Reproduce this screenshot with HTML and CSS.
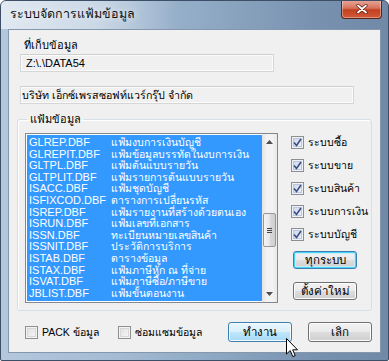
FILE: index.html
```html
<!DOCTYPE html>
<html>
<head>
<meta charset="utf-8">
<link rel="stylesheet" href="styles.css">
</head>
<body>
<div class="window">
  <div class="titlebar">
    <span class="title">ระบบจัดการแฟ้มข้อมูล</span>
    <div class="close"><svg width="14" height="10" viewBox="0 0 14 10"><path d="M3 1.5 L11 8.5 M11 1.5 L3 8.5" stroke="#5a1a10" stroke-width="3.2" stroke-linecap="round"/><path d="M3 1.5 L11 8.5 M11 1.5 L3 8.5" stroke="#ffffff" stroke-width="1.8" stroke-linecap="round"/></svg></div>
  </div>
  <div class="client">
    <div class="lbl">ที่เก็บข้อมูล</div>
    <div class="field path">Z:\.\DATA54</div>
    <div class="field company">บริษัท เอ็กซ์เพรสซอฟท์แวร์กรุ๊ป จำกัด</div>
    <fieldset class="group">
      <legend>แฟ้มข้อมูล</legend>
      <div class="group-body">
        <div class="listbox">
          <div class="rows">
            <div class="row"><span class="fn">GLREP.DBF</span><span class="desc">แฟ้มงบการเงินบัญชี</span></div>
            <div class="row"><span class="fn">GLREPIT.DBF</span><span class="desc">แฟ้มข้อมูลบรรทัดในงบการเงิน</span></div>
            <div class="row"><span class="fn">GLTPL.DBF</span><span class="desc">แฟ้มต้นแบบรายวัน</span></div>
            <div class="row"><span class="fn">GLTPLIT.DBF</span><span class="desc">แฟ้มรายการต้นแบบรายวัน</span></div>
            <div class="row"><span class="fn">ISACC.DBF</span><span class="desc">แฟ้มชุดบัญชี</span></div>
            <div class="row"><span class="fn">ISFIXCOD.DBF</span><span class="desc">ตารางการเปลี่ยนรหัส</span></div>
            <div class="row"><span class="fn">ISREP.DBF</span><span class="desc">แฟ้มรายงานที่สร้างด้วยตนเอง</span></div>
            <div class="row"><span class="fn">ISRUN.DBF</span><span class="desc">แฟ้มเลขที่เอกสาร</span></div>
            <div class="row"><span class="fn">ISSN.DBF</span><span class="desc">ทะเบียนหมายเลขสินค้า</span></div>
            <div class="row"><span class="fn">ISSNIT.DBF</span><span class="desc">ประวัติการบริการ</span></div>
            <div class="row"><span class="fn">ISTAB.DBF</span><span class="desc">ตารางข้อมูล</span></div>
            <div class="row"><span class="fn">ISTAX.DBF</span><span class="desc">แฟ้มภาษีหัก ณ ที่จ่าย</span></div>
            <div class="row"><span class="fn">ISVAT.DBF</span><span class="desc">แฟ้มภาษีซื้อ/ภาษีขาย</span></div>
            <div class="row"><span class="fn">JBLIST.DBF</span><span class="desc">แฟ้มขั้นตอนงาน</span></div>
          </div>
          <div class="vscroll">
            <div class="arrow"><svg width="7" height="4" viewBox="0 0 7 4"><path d="M0 4 L3.5 0 L7 4 Z" fill="#4d4d4d"/></svg></div>
            <div class="track">
              <div class="thumb"><span class="grip"></span></div>
            </div>
            <div class="arrow"><svg width="7" height="4" viewBox="0 0 7 4"><path d="M0 0 L3.5 4 L7 0 Z" fill="#4d4d4d"/></svg></div>
          </div>
        </div>
        <div class="side">
          <label class="chk"><span class="box on"><svg width="9" height="9" viewBox="0 0 9 9"><path d="M1 4.5 L3.5 7.5 L8 1" fill="none" stroke="#3b4f84" stroke-width="1.6"/></svg></span>ระบบซื้อ</label>
          <label class="chk"><span class="box on"><svg width="9" height="9" viewBox="0 0 9 9"><path d="M1 4.5 L3.5 7.5 L8 1" fill="none" stroke="#3b4f84" stroke-width="1.6"/></svg></span>ระบบขาย</label>
          <label class="chk"><span class="box on"><svg width="9" height="9" viewBox="0 0 9 9"><path d="M1 4.5 L3.5 7.5 L8 1" fill="none" stroke="#3b4f84" stroke-width="1.6"/></svg></span>ระบบสินค้า</label>
          <label class="chk"><span class="box on"><svg width="9" height="9" viewBox="0 0 9 9"><path d="M1 4.5 L3.5 7.5 L8 1" fill="none" stroke="#3b4f84" stroke-width="1.6"/></svg></span>ระบบการเงิน</label>
          <label class="chk"><span class="box on"><svg width="9" height="9" viewBox="0 0 9 9"><path d="M1 4.5 L3.5 7.5 L8 1" fill="none" stroke="#3b4f84" stroke-width="1.6"/></svg></span>ระบบบัญชี</label>
          <div class="btn default side-btn">ทุกระบบ</div>
          <div class="btn side-btn second">ตั้งค่าใหม่</div>
        </div>
      </div>
    </fieldset>
    <div class="bottom">
      <label class="chk plain pack"><span class="box"></span>PACK ข้อมูล</label>
      <label class="chk plain repair"><span class="box"></span>ซ่อมแซมข้อมูล</label>
      <div class="btn hover run">ทำงาน</div>
      <div class="btn cancel">เลิก</div>
    </div>
  </div>
  <svg class="cursor" width="13" height="20" viewBox="0 0 13 20"><path d="M0.5 0.5 L0.5 16 L4.2 12.6 L6.8 18.6 L9.2 17.6 L6.7 11.8 L11.5 11.8 Z" fill="#ffffff" stroke="#000000" stroke-width="1" stroke-linejoin="round"/></svg>
</div>
</body>
</html>
```
FILE: styles.css
```css
* { box-sizing: border-box; }
html, body { margin: 0; padding: 0; background: #ffffff; }
body {
  font-family: "Liberation Sans", "Noto Sans", "DejaVu Sans", sans-serif;
  font-size: 11px;
  color: #000;
}
.window {
  position: relative;
  width: 389px;
  height: 361px;
  border: 1px solid #3c4f66;
  border-radius: 6px 6px 2px 2px;
  background: linear-gradient(90deg, #b4c8dd 0%, #a4bbd3 30%, #8ea8c3 55%, #7892b0 80%, #6f89a7 100%);
  padding: 0 7px 7px 7px;
  overflow: hidden;
}
.titlebar {
  position: relative;
  height: 28px;
  display: flex;
  align-items: center;
  background: linear-gradient(90deg, rgba(255,255,255,0.6) 0%, rgba(255,255,255,0.4) 25%, rgba(255,255,255,0) 45%);
  margin: 0 -7px;
  padding-left: 9px;
}
.title {
  font-size: 12.5px;
  color: #111;
  text-shadow: 0 0 6px rgba(255,255,255,0.9);
  padding-bottom: 2px;
  white-space: nowrap;
}
.close {
  position: absolute;
  right: 6px;
  top: -1px;
  width: 41px;
  height: 19px;
  border: 1px solid #5a2418;
  border-top: none;
  border-radius: 0 0 4px 4px;
  background: linear-gradient(180deg, #e9a99a 0%, #d6735d 45%, #c2401f 55%, #d05a3a 100%);
  display: flex;
  align-items: center;
  justify-content: center;
  box-shadow: inset 0 0 0 1px rgba(255,255,255,0.35);
}
.client {
  height: 324px;
  background: #f0f0f0;
  border: 1px solid #8597ad;
  padding: 8px 0 0 0;
  position: relative;
}
.lbl {
  margin-left: 15px;
  height: 14px;
  line-height: 14px;
  font-size: 11px;
  white-space: nowrap;
}
.field {
  margin-left: 11px;
  margin-top: 2px;
  height: 18px;
  border: 1px solid #d6d6d6;
  border-top-color: #cfcfcf;
  background: #f0f0f0;
  line-height: 16px;
  box-shadow: inset 0 0 0 1px #fbfbfb;
  white-space: nowrap;
  overflow: hidden;
}
.path { width: 254px; padding-left: 5px; font-size: 11px; }
.company { width: 334px; margin-top: 14px; padding-left: 1px; font-size: 10.7px; }
.group {
  margin: 9px 0 0 8px;
  width: 355px;
  height: 198px;
  border: 1px solid #d5dfe5;
  border-radius: 3px;
  padding: 0 0 0 7px;
  box-shadow: inset 1px 1px 0 #ffffff;
}
.group legend {
  padding: 0 3px;
  margin-left: 2px;
  font-size: 11px;
  line-height: 13px;
  height: 13px;
}
.group-body {
  display: flex;
  padding-top: 7px;
}
.listbox {
  width: 253px;
  height: 170px;
  border: 1px solid #828790;
  display: flex;
  background: #ffffff;
}
.rows {
  flex: 1;
  background: #3399ff;
  padding-top: 2px;
  margin: 1px 0 1px 1px;
  overflow: hidden;
}
.row {
  height: 11.6px;
  line-height: 11.6px;
  color: #ffffff;
  display: flex;
  white-space: nowrap;
}
.fn { width: 84px; padding-left: 2px; flex: none; font-size: 11px; }
.desc { font-size: 10.5px; }
.vscroll {
  width: 15px;
  display: flex;
  flex-direction: column;
  background: linear-gradient(90deg, #e3e3e3, #f2f2f2 30%, #f2f2f2 70%, #e8e8e8);
}
.arrow {
  height: 16px;
  display: flex;
  align-items: center;
  justify-content: center;
  flex: none;
}
.track {
  flex: 1;
  padding-top: 63px;
}
.thumb {
  margin: 0 1px;
  height: 34px;
  border: 1px solid #979797;
  border-radius: 2px;
  background: linear-gradient(90deg, #f4f4f4, #e7e7e7 50%, #d9d9d9 51%, #cfcfcf);
  display: flex;
  align-items: center;
  justify-content: center;
}
.grip {
  width: 5px;
  height: 5px;
  border-top: 1px solid #444;
  border-bottom: 1px solid #444;
  background: linear-gradient(#444, #444) center/5px 1px no-repeat;
}
.side {
  display: flex;
  flex-direction: column;
  padding-left: 13px;
  padding-top: 3px;
}
.chk {
  display: flex;
  align-items: center;
  height: 13px;
  line-height: 13px;
  margin-bottom: 10px;
  font-size: 10.5px;
  gap: 4px;
  white-space: nowrap;
}
.box {
  width: 13px;
  height: 13px;
  border: 1px solid #8e8f8f;
  background: linear-gradient(135deg, #dcdcdc, #fafafa);
  box-shadow: inset 0 0 0 1px #f4f4f4, inset 0 0 0 2px #d7d7d7;
  display: flex;
  align-items: center;
  justify-content: center;
  flex: none;
}
.box.on {
  background: linear-gradient(135deg, #c9d3e6, #f2f5fa);
  box-shadow: inset 0 0 0 1px #eef2f8, inset 0 0 0 2px #bcc7db;
}
.btn {
  height: 18px;
  border: 1px solid #707070;
  border-radius: 3px;
  background: linear-gradient(180deg, #f2f2f2 0%, #ebebeb 48%, #dddddd 52%, #cfcfcf 100%);
  box-shadow: inset 0 0 0 1px #fcfcfc;
  display: flex;
  align-items: center;
  justify-content: center;
  font-size: 11.5px;
  white-space: nowrap;
}
.btn.default {
  border-color: #3c7fb1;
  box-shadow: inset 0 0 0 1px #48d2f8, inset 0 0 0 2px #c6ecf9;
}
.btn.hover {
  border-color: #3c7fb1;
  background: linear-gradient(180deg, #eaf6fd 0%, #d9f0fc 48%, #bee6fd 52%, #a7d9f5 100%);
  box-shadow: inset 0 0 0 1px #f6fbfe;
}
.side-btn { width: 64px; margin-left: 2px; }
.side-btn.second { margin-top: 13px; }
.bottom {
  display: flex;
  align-items: center;
  height: 20px;
  margin-top: 11px;
  padding-left: 16px;
}
.chk.plain { margin-bottom: 0; }
.pack { width: 93px; }
.repair { width: 110px; }
.run { width: 64px; height: 20px; }
.cancel { width: 64px; height: 20px; margin-left: 16px; }
.cursor {
  position: absolute;
  left: 285px;
  top: 337px;
}
```
